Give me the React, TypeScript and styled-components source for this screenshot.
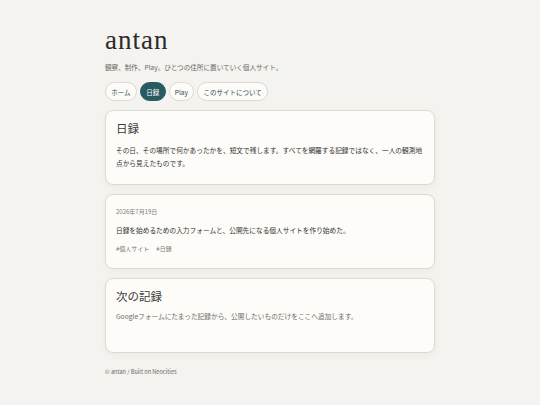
import React from "react";
import styled, { createGlobalStyle } from "styled-components";

const GlobalStyle = createGlobalStyle`
  html, body {
    margin: 0;
    padding: 0;
    background: #f4f3ef;
  }
  body {
    font-family: "Noto Sans CJK JP", "Noto Sans", sans-serif;
    color: #2f2f2f;
  }
`;

const Page = styled.div`
  width: 330px;
  margin: 0 auto;
  padding: 24px 0 20px;
`;

const Header = styled.header`
  display: flex;
  flex-direction: column;
`;

const SiteTitle = styled.h1`
  margin: 0;
  font-family: "Liberation Serif", "Noto Sans CJK JP", serif;
  font-weight: 400;
  font-size: 27px;
  line-height: 32px;
  letter-spacing: 1px;
  color: #2b2b2b;
`;

const Tagline = styled.p`
  margin: 6px 0 0;
  font-size: 6.6px;
  line-height: 10px;
  color: #6b6a66;
`;

const Nav = styled.nav`
  display: flex;
  gap: 3px;
  margin-top: 10px;
`;

const Pill = styled.a<{ $active?: boolean }>`
  display: inline-flex;
  align-items: center;
  height: 19px;
  box-sizing: border-box;
  padding: 0 5.3px;
  border-radius: 10px;
  border: 1px solid ${(p) => (p.$active ? "#275b61" : "#dcd9d2")};
  background: ${(p) => (p.$active ? "#275b61" : "#fdfcf8")};
  color: ${(p) => (p.$active ? "#ffffff" : "#2f4a4d")};
  font-size: 6.5px;
  text-decoration: none;
`;

const Cards = styled.main`
  display: flex;
  flex-direction: column;
  gap: 9px;
  margin-top: 9px;
`;

const Card = styled.section`
  box-sizing: border-box;
  min-height: 75px;
  padding: 9px 10px 10px;
  background: #fdfcf8;
  border: 1px solid #dddad3;
  border-radius: 8px;
  box-shadow: 0 2px 6px rgba(0, 0, 0, 0.04);
`;

const CardTitle = styled.h2`
  margin: 0;
  font-weight: 400;
  font-size: 11.5px;
  line-height: 16px;
  color: #3a3a3a;
`;

const Body = styled.p<{ $muted?: boolean }>`
  margin: 0;
  font-size: 6.7px;
  line-height: 13px;
  color: ${(p) => (p.$muted ? "#6d6c68" : "#333333")};
`;

const Meta = styled.div`
  font-size: 6px;
  line-height: 10px;
  color: #807e79;
`;

const Tags = styled.div`
  display: flex;
  gap: 7px;
  font-size: 6px;
  line-height: 10px;
  color: #807e79;
`;

const Footer = styled.footer`
  margin-top: 14px;
  font-size: 5.6px;
  line-height: 10px;
  color: #6b6a66;
`;

const navItems = ["ホーム", "日録", "Play", "このサイトについて"];

export default function App() {
  return (
    <>
      <GlobalStyle />
      <Page>
        <Header>
          <SiteTitle>antan</SiteTitle>
          <Tagline>観察、制作、Play。ひとつの住所に置いていく個人サイト。</Tagline>
          <Nav>
            {navItems.map((item) => (
              <Pill key={item} href="#" $active={item === "日録"}>
                {item}
              </Pill>
            ))}
          </Nav>
        </Header>
        <Cards>
          <Card>
            <CardTitle>日録</CardTitle>
            <Body style={{ marginTop: 8 }}>
              その日、その場所で何かあったかを、短文で残します。すべてを網羅する記録ではなく、一人の観測地点から見えたものです。
            </Body>
          </Card>
          <Card>
            <Meta style={{ marginTop: 3 }}>2026年7月19日</Meta>
            <Body style={{ marginTop: 7 }}>
              日録を始めるための入力フォームと、公開先になる個人サイトを作り始めた。
            </Body>
            <Tags style={{ marginTop: 7 }}>
              <span>#個人サイト</span>
              <span>#日録</span>
            </Tags>
          </Card>
          <Card>
            <CardTitle>次の記録</CardTitle>
            <Body $muted style={{ marginTop: 6 }}>
              Googleフォームにたまった記録から、公開したいものだけをここへ追加します。
            </Body>
          </Card>
        </Cards>
        <Footer>© antan / Built on Neocities</Footer>
      </Page>
    </>
  );
}
